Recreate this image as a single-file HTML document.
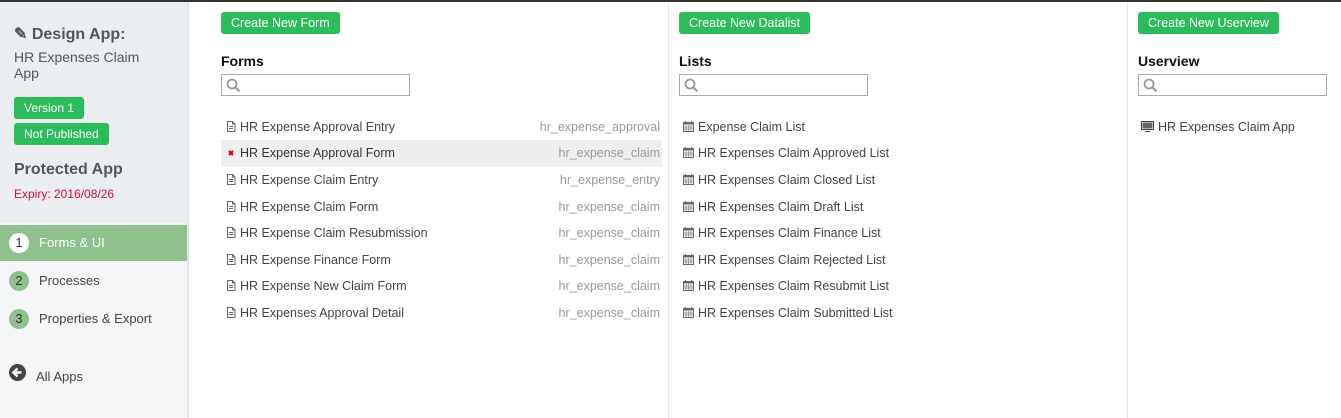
<!DOCTYPE html>
<html><head><style>
*{margin:0;padding:0;box-sizing:border-box}
body{width:1341px;height:418px;overflow:hidden;background:#fff;font-family:"Liberation Sans",sans-serif;position:relative;color:#444}
.topline{position:absolute;left:0;top:0;width:1341px;height:2px;background:#333}
.side{position:absolute;left:0;top:2px;width:189px;height:416px;background:#f5f6f8;border-right:2px solid #e2e4e6}
.sidetop{position:absolute;left:0;top:0;width:187px;height:221px;background:#ebeef1}
.abs{position:absolute;white-space:nowrap}
.badge{position:absolute;background:#2dbc5c;color:#fff;font-size:12px;border-radius:3px;padding:0 10px;height:22px;line-height:22px}
.band{position:absolute;left:0;top:223px;width:187px;height:36px;background:#8fc18f}
.num{position:absolute;width:20px;height:20px;border-radius:50%;background:#8fc18f;color:#333;font-size:13px;text-align:center;line-height:20px}
.nav{font-size:13px;color:#444}
.col{position:absolute;top:2px;height:416px;border-left:1px solid #e8e8e8}
.btn{position:absolute;top:10px;height:22px;line-height:22px;background:#2dbc5c;color:#fff;font-size:12.5px;border-radius:3px;padding:0 10px}
h4{position:absolute;top:51px;font-size:14px;font-weight:bold;color:#111}
.search{position:absolute;top:72px;width:189px;height:22px;border:1px solid #aaa;background:#fff}
.row{position:absolute;height:27px;line-height:27px;font-size:12.5px;color:#444;white-space:nowrap}
.row svg{vertical-align:-1px;margin-right:4px}
.row .id{position:absolute;right:2px;top:0;color:#999}
</style></head><body>
<svg width="0" height="0" style="position:absolute">
<defs>
<symbol id="doc" viewBox="0 0 10 11"><path d="M1.5 .5h5l2.5 2.5v7.5h-7.5z M6.5 .5v2.5h2.5" fill="none" stroke="#666"/><path d="M3 5.5h4M3 7.5h4" stroke="#666"/></symbol>
<symbol id="cal" viewBox="0 0 11 11"><rect x=".5" y="1.5" width="10" height="9" fill="#fff" stroke="#666"/><rect x=".5" y="1.5" width="10" height="2" fill="#666"/><path d="M2.5 0v3M8.5 0v3" stroke="#666"/><path d="M.5 6h10M.5 8h10M3 4v6M5.5 4v6M8 4v6" stroke="#888" stroke-width=".8"/></symbol>
<symbol id="srch" viewBox="0 0 20 20"><circle cx="8" cy="9" r="4.5" fill="none" stroke="#999" stroke-width="1.8"/><path d="M11.5 12.5l4 4" stroke="#999" stroke-width="2"/></symbol>
</defs></svg>
<div class="topline"></div>
<div class="side">
<div class="sidetop"></div>
<div class="abs" style="left:14px;top:22px;font-size:16px;font-weight:bold;color:#555">&#9998; Design App:</div>
<div class="abs" style="left:14px;top:47px;font-size:14px;line-height:16px;color:#555">HR Expenses Claim<br>App</div>
<div class="badge" style="left:14px;top:95px">Version 1</div>
<div class="badge" style="left:14px;top:121px">Not Published</div>
<div class="abs" style="left:14px;top:159px;font-size:16px;font-weight:bold;color:#555">Protected App</div>
<div class="abs" style="left:14px;top:185px;font-size:12px;color:#d0103a">Expiry: 2016/08/26</div>
<div class="band"></div>
<div class="num" style="left:9px;top:231px;background:#fff">1</div>
<div class="abs nav" style="left:39px;top:233px;color:#fff">Forms &amp; UI</div>
<div class="num" style="left:9px;top:269px">2</div>
<div class="abs nav" style="left:39px;top:271px">Processes</div>
<div class="num" style="left:9px;top:307px">3</div>
<div class="abs nav" style="left:39px;top:309px">Properties &amp; Export</div>
<svg class="abs" style="left:9px;top:362px" width="17" height="17" viewBox="0 0 17 17"><circle cx="8.5" cy="8.5" r="8.5" fill="#444"/><path d="M12.5 8.5H5M8.5 4.5l-4 4 4 4" stroke="#fff" stroke-width="2.4" fill="none"/></svg>
<div class="abs nav" style="left:36px;top:367px">All Apps</div>
</div>

<div class="col" style="left:189px;width:479px;border-left:none">
<div class="btn" style="left:32px">Create New Form</div>
<h4 style="left:32px">Forms</h4>
<div class="search" style="left:32px"><svg width="20" height="20" style="position:absolute;left:2px;top:0"><use href="#srch"/></svg></div>
</div>
<div class="col" style="left:668px;width:460px">
<div class="btn" style="left:10px">Create New Datalist</div>
<h4 style="left:10px">Lists</h4>
<div class="search" style="left:10px"><svg width="20" height="20" style="position:absolute;left:2px;top:0"><use href="#srch"/></svg></div>
</div>
<div class="col" style="left:1127px;width:214px">
<div class="btn" style="left:10px">Create New Userview</div>
<h4 style="left:10px">Userview</h4>
<div class="search" style="left:10px"><svg width="20" height="20" style="position:absolute;left:2px;top:0"><use href="#srch"/></svg></div>
</div>

<div style="position:absolute;left:221px;top:140px;width:441px;height:27px;background:#eee"></div>

<div class="row" style="left:226px;top:114px;width:436px"><svg width="10" height="11"><use href="#doc"/></svg>HR Expense Approval Entry<span class="id">hr_expense_approval</span></div>
<div class="row" style="left:226px;top:140px;width:436px;color:#333"><svg width="10" height="11" viewBox="0 0 10 11"><path d="M3 4l4 4M7 4l-4 4" stroke="#d00" stroke-width="2"/></svg>HR Expense Approval Form<span class="id">hr_expense_claim</span></div>
<div class="row" style="left:226px;top:167px;width:436px"><svg width="10" height="11"><use href="#doc"/></svg>HR Expense Claim Entry<span class="id">hr_expense_entry</span></div>
<div class="row" style="left:226px;top:194px;width:436px"><svg width="10" height="11"><use href="#doc"/></svg>HR Expense Claim Form<span class="id">hr_expense_claim</span></div>
<div class="row" style="left:226px;top:220px;width:436px"><svg width="10" height="11"><use href="#doc"/></svg>HR Expense Claim Resubmission<span class="id">hr_expense_claim</span></div>
<div class="row" style="left:226px;top:247px;width:436px"><svg width="10" height="11"><use href="#doc"/></svg>HR Expense Finance Form<span class="id">hr_expense_claim</span></div>
<div class="row" style="left:226px;top:273px;width:436px"><svg width="10" height="11"><use href="#doc"/></svg>HR Expense New Claim Form<span class="id">hr_expense_claim</span></div>
<div class="row" style="left:226px;top:300px;width:436px"><svg width="10" height="11"><use href="#doc"/></svg>HR Expenses Approval Detail<span class="id">hr_expense_claim</span></div>

<div class="row" style="left:683px;top:114px"><svg width="11" height="11"><use href="#cal"/></svg>Expense Claim List</div>
<div class="row" style="left:683px;top:140px"><svg width="11" height="11"><use href="#cal"/></svg>HR Expenses Claim Approved List</div>
<div class="row" style="left:683px;top:167px"><svg width="11" height="11"><use href="#cal"/></svg>HR Expenses Claim Closed List</div>
<div class="row" style="left:683px;top:194px"><svg width="11" height="11"><use href="#cal"/></svg>HR Expenses Claim Draft List</div>
<div class="row" style="left:683px;top:220px"><svg width="11" height="11"><use href="#cal"/></svg>HR Expenses Claim Finance List</div>
<div class="row" style="left:683px;top:247px"><svg width="11" height="11"><use href="#cal"/></svg>HR Expenses Claim Rejected List</div>
<div class="row" style="left:683px;top:273px"><svg width="11" height="11"><use href="#cal"/></svg>HR Expenses Claim Resubmit List</div>
<div class="row" style="left:683px;top:300px"><svg width="11" height="11"><use href="#cal"/></svg>HR Expenses Claim Submitted List</div>

<div class="row" style="left:1141px;top:114px"><svg width="13" height="11" viewBox="0 0 13 11"><rect x=".5" y=".5" width="12" height="8" fill="#fff" stroke="#444"/><rect x="1.5" y="1.5" width="10" height="6" fill="#666"/><path d="M4 10.5h5" stroke="#444"/></svg>HR Expenses Claim App</div>
</body></html>
